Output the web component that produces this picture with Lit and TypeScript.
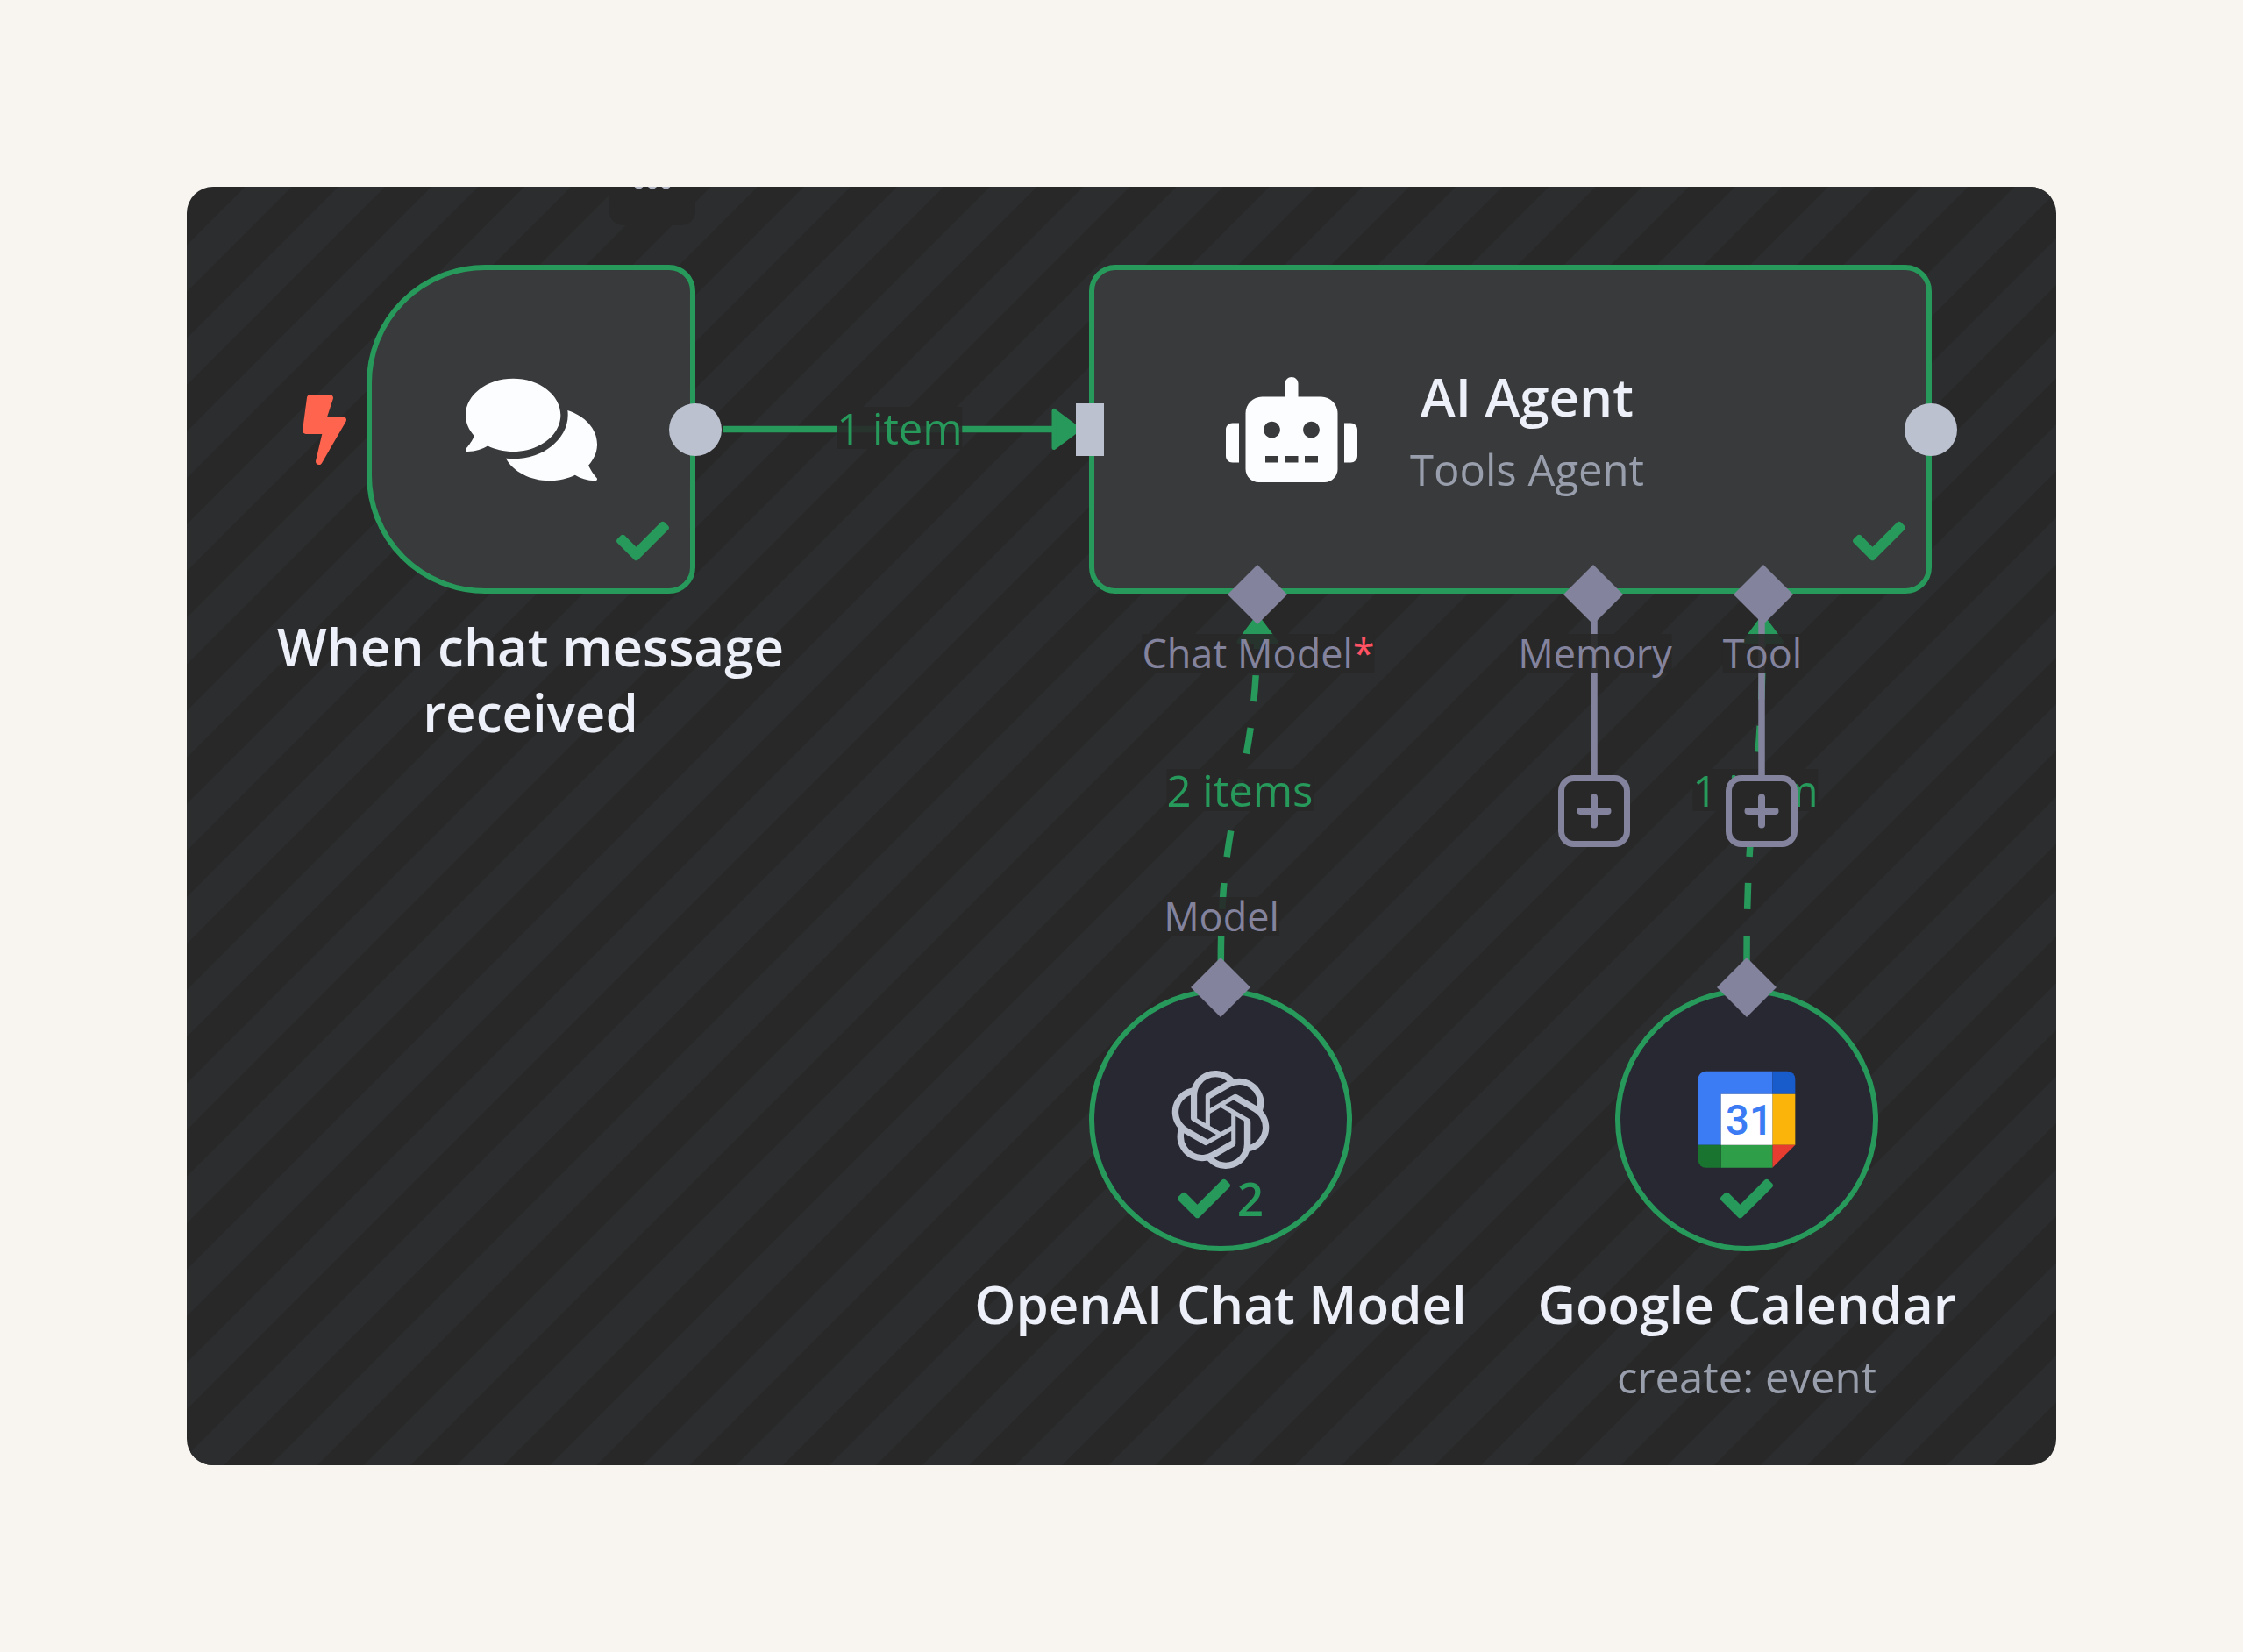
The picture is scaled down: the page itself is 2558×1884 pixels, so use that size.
import { LitElement, html, svg, css } from "lit";
import { customElement } from "lit/decorators.js";

type HandleKind = "dot" | "bar" | "diamond";

interface Point {
  x: number;
  y: number;
}

interface Handle extends Point {
  kind: HandleKind;
}

interface Label extends Point {
  text: string;
  required?: boolean;
}

const at = (p: Point) => `left:${p.x}px;top:${p.y}px`;

const edgeLabels: Label[] = [
  { x: 813, y: 275, text: "1 item" },
  { x: 1201, y: 688, text: "2 items" },
  { x: 1789, y: 688, text: "1 item" },
];

const handleLabels: Label[] = [
  { x: 1222, y: 532, text: "Chat Model", required: true },
  { x: 1606, y: 532, text: "Memory" },
  { x: 1797, y: 532, text: "Tool" },
  { x: 1180, y: 832, text: "Model" },
];

const handles: Handle[] = [
  { kind: "dot", x: 580, y: 277 },
  { kind: "bar", x: 1030, y: 277 },
  { kind: "dot", x: 1989, y: 277 },
  { kind: "diamond", x: 1221, y: 465 },
  { kind: "diamond", x: 1604, y: 465 },
  { kind: "diamond", x: 1798, y: 465 },
  { kind: "diamond", x: 1179, y: 913 },
  { kind: "diamond", x: 1779, y: 913 },
];

const addButtons = [
  { x: 1605, y: 712, name: "Add memory" },
  { x: 1796, y: 712, name: "Add tool" },
];

const checkIcon = html`<svg class="check" viewBox="0 0 512 512" aria-hidden="true">
  <path fill="currentColor" d="M173.898 439.404l-166.4-166.4c-9.997-9.997-9.997-26.206 0-36.204l36.203-36.204c9.997-9.998 26.207-9.998 36.204 0L192 312.69 432.095 72.596c9.997-9.997 26.207-9.997 36.204 0l36.203 36.204c9.997 9.997 9.997 26.206 0 36.204l-294.4 294.401c-9.998 9.997-26.207 9.997-36.204-.001z"/>
</svg>`;

const boltIcon = html`<svg viewBox="0 0 320 512" width="50" height="80" aria-hidden="true">
  <path fill="currentColor" d="M296 160H180.600l42.600-129.800C227.200 15 215.700 0 200 0H56C44 0 33.800 8.900 32.200 20.800l-32 240C-1.700 275.200 9.500 288 24 288h118.700L96.600 482.500c-3.600 15.200 8 29.500 23.300 29.500 8.400 0 16.400-4.400 20.800-12l176-304c9.300-15.900-2.200-36-20.700-36z"/>
</svg>`;

const commentsIcon = html`<svg viewBox="0 0 576 512" width="150" height="134" aria-hidden="true">
  <path fill="currentColor" d="M416 192c0-88.400-93.100-160-208-160S0 103.600 0 192c0 34.300 14.100 65.900 38 92-13.400 30.200-35.500 54.200-35.800 54.500-2.200 2.300-2.800 5.700-1.500 8.700S4.800 352 8 352c36.600 0 66.900-12.300 88.700-25 32.200 15.700 70.300 25 111.300 25 114.900 0 208-71.600 208-160zm122 220c23.900-26 38-57.700 38-92 0-66.900-53.500-124.200-129.300-148.100.9 6.600 1.300 13.300 1.300 20.100 0 105.900-107.700 192-240 192-10.800 0-21.300-.8-31.700-1.900C207.800 439.600 281.800 480 368 480c41 0 79.100-9.200 111.300-25 21.800 12.700 52.100 25 88.700 25 3.200 0 6.100-1.900 7.300-4.800 1.300-2.900.7-6.300-1.500-8.700-.3-.3-22.400-24.200-35.800-54.500z"/>
</svg>`;

const robotIcon = html`<svg viewBox="0 0 640 512" width="150" height="120" aria-hidden="true">
  <path fill="currentColor" d="M32 224h32v192H32c-17.700 0-32-14.300-32-32V256c0-17.700 14.300-32 32-32zm512-48v272c0 35.300-28.700 64-64 64H160c-35.300 0-64-28.700-64-64V176c0-44.200 35.800-80 80-80h112V32c0-17.700 14.300-32 32-32s32 14.300 32 32v64h112c44.200 0 80 35.800 80 80zM264 256c0-22.100-17.900-40-40-40s-40 17.900-40 40 17.900 40 40 40 40-17.900 40-40zm-8 128h-64v32h64v-32zm96 0h-64v32h64v-32zm104-128c0-22.100-17.900-40-40-40s-40 17.900-40 40 17.900 40 40 40 40-17.900 40-40zm-8 128h-64v32h64v-32zm192-128v128c0 17.700-14.300 32-32 32h-32V224h32c17.700 0 32 14.300 32 32z"/>
</svg>`;

const openAiIcon = html`<svg class="logo" viewBox="0 0 24 24" aria-hidden="true">
  <path fill="currentColor" d="M22.2819 9.8211a5.9847 5.9847 0 0 0-.5157-4.9108 6.0462 6.0462 0 0 0-6.5098-2.9A6.0651 6.0651 0 0 0 4.9807 4.1818a5.9847 5.9847 0 0 0-3.9977 2.9 6.0462 6.0462 0 0 0 .7427 7.0966 5.98 5.98 0 0 0 .511 4.9107 6.051 6.051 0 0 0 6.5146 2.9001A5.9847 5.9847 0 0 0 13.2599 24a6.0557 6.0557 0 0 0 5.7718-4.2058 5.9894 5.9894 0 0 0 3.9977-2.9001 6.0557 6.0557 0 0 0-.7475-7.0729zm-9.022 12.6081a4.4755 4.4755 0 0 1-2.8764-1.0408l.1419-.0804 4.7783-2.7582a.7948.7948 0 0 0 .3927-.6813v-6.7369l2.02 1.1686a.071.071 0 0 1 .038.052v5.5826a4.504 4.504 0 0 1-4.4945 4.4944zm-9.6607-4.1254a4.4708 4.4708 0 0 1-.5346-3.0137l.142.0852 4.783 2.7582a.7712.7712 0 0 0 .7806 0l5.8428-3.3685v2.3324a.0804.0804 0 0 1-.0332.0615L9.74 19.9502a4.4992 4.4992 0 0 1-6.1408-1.6464zM2.3408 7.8956a4.485 4.485 0 0 1 2.3655-1.9728V11.6a.7664.7664 0 0 0 .3879.6765l5.8144 3.3543-2.0201 1.1685a.0757.0757 0 0 1-.071 0l-4.8303-2.7865A4.504 4.504 0 0 1 2.3408 7.872zm16.5963 3.8558L13.1038 8.364 15.1192 7.2a.0757.0757 0 0 1 .071 0l4.8303 2.7913a4.4944 4.4944 0 0 1-.6765 8.1042v-5.6772a.79.79 0 0 0-.407-.667zm2.0107-3.0231l-.142-.0852-4.7735-2.7818a.7759.7759 0 0 0-.7854 0L9.409 9.2297V6.8974a.0662.0662 0 0 1 .0284-.0615l4.8303-2.7866a4.4992 4.4992 0 0 1 6.6802 4.66zM8.3065 12.863l-2.02-1.1638a.0804.0804 0 0 1-.038-.0567V6.0742a4.4992 4.4992 0 0 1 7.3757-3.4537l-.142.0805L8.704 5.459a.7948.7948 0 0 0-.3927.6813zm1.0976-2.3654l2.602-1.4998 2.6069 1.4998v2.9994l-2.5974 1.4997-2.6067-1.4997Z"/>
</svg>`;

const calendarIcon = html`<svg class="logo" viewBox="0 0 336 336" aria-hidden="true">
  <path fill="#3b7bf3" d="M28 2H256V80H80V254H2V28A26 26 0 0 1 28 2Z"/>
  <path fill="#185ccb" d="M256 2H308A26 26 0 0 1 334 28V80H256Z"/>
  <path fill="#fab40a" d="M256 80H334V254H256Z"/>
  <path fill="#e73c30" d="M256 254H334L256 332Z"/>
  <path fill="#2e9f48" d="M80 254H256V332H80Z"/>
  <path fill="#19742f" d="M2 254H80V332H28A26 26 0 0 1 2 306Z"/>
  <path fill="#ffffff" d="M80 80H256V254H80Z"/>
  <text class="day" x="96" y="219">31</text>
</svg>`;

@customElement("app-root")
export class AppRoot extends LitElement {
  static styles = css`
    :host {
      --success: #26995b;
      --port: #bbc1cf;
      --aux: #83839e;
      --title: #eef0f9;
      --subtitle: #999eac;
      --node: #393a3b;
      --base: #282828;
      display: flex;
      flex-direction: column;
      box-sizing: border-box;
      min-height: 100vh;
      padding: 213px;
      background: #f8f5f0;
      font-family: "Open Sans", "Noto Sans", sans-serif;
    }
    .canvas {
      position: relative;
      flex: 1;
      overflow: hidden;
      border-radius: 30px;
      background: var(--base);
    }
    .layer {
      position: absolute;
      inset: 0;
      width: 100%;
      height: 100%;
    }
    .menu {
      position: absolute;
      left: 482px;
      top: -32px;
      width: 98px;
      height: 76px;
      padding: 0;
      border: 0;
      border-radius: 16px;
      background: var(--base);
      color: #b1b5c3;
    }
    .menu svg {
      display: block;
      margin: 0 auto 20px;
    }
    .node {
      position: absolute;
      display: flex;
      align-items: center;
      justify-content: center;
      box-sizing: border-box;
      border: 6px solid var(--success);
      background: var(--node);
      color: #fcfdff;
    }
    .trigger {
      width: 375px;
      height: 375px;
      border-radius: 135px 30px 30px 135px;
    }
    .agent {
      justify-content: flex-start;
      width: 961px;
      height: 375px;
      padding-left: 150px;
      gap: 60px;
      border-radius: 30px;
    }
    .sub {
      width: 300px;
      height: 300px;
      border-radius: 50%;
      background: #282833;
      color: var(--port);
    }
    .logo {
      width: 112px;
      height: 112px;
    }
    .day {
      font-family: Roboto, sans-serif;
      font-size: 142px;
      font-weight: 500;
      fill: #3b7bf3;
    }
    .status {
      position: absolute;
      display: flex;
      align-items: center;
      gap: 8px;
      color: var(--success);
      font-size: 53px;
      font-weight: 600;
      line-height: 60px;
    }
    .corner {
      right: 24px;
      bottom: 24px;
    }
    .foot {
      left: 0;
      right: 0;
      bottom: 24px;
      justify-content: center;
    }
    .check {
      width: 60px;
      height: 60px;
    }
    .bolt {
      position: absolute;
      color: #ff644e;
    }
    .bolt svg {
      display: block;
    }
    .text,
    .caption {
      display: flex;
      flex-direction: column;
      gap: 15px;
      text-align: center;
    }
    .caption {
      position: absolute;
      width: 640px;
      transform: translateX(-50%);
    }
    .title,
    .subtitle {
      margin: 0;
    }
    .title {
      color: var(--title);
      font-size: 60px;
      font-weight: 600;
      line-height: 75px;
    }
    .subtitle {
      color: var(--subtitle);
      font-size: 49px;
      font-weight: 400;
      line-height: 60px;
    }
    .label {
      position: absolute;
      transform: translate(-50%, -50%);
      background: rgb(40 40 40 / 0.9);
      white-space: nowrap;
    }
    .edge {
      color: var(--success);
      font-size: 49px;
      line-height: 48px;
    }
    .port {
      color: var(--aux);
      font-size: 45px;
      line-height: 44px;
    }
    .required {
      color: #ff5264;
    }
    .handle {
      position: absolute;
      transform: translate(-50%, -50%);
    }
    .dot {
      width: 60px;
      height: 60px;
      border-radius: 50%;
      background: var(--port);
    }
    .bar {
      width: 32px;
      height: 60px;
      background: var(--port);
    }
    .diamond {
      width: 68px;
      height: 68px;
      clip-path: polygon(50% 0, 100% 50%, 50% 100%, 0 50%);
      background: var(--aux);
    }
    .add {
      position: absolute;
      display: grid;
      place-items: center;
      box-sizing: border-box;
      width: 82px;
      height: 82px;
      padding: 0;
      transform: translate(-50%, -50%);
      border: 7px solid var(--aux);
      border-radius: 18px;
      background: var(--base);
      color: var(--aux);
    }
  `;

  private renderBackdrop() {
    return html`<svg class="layer" aria-hidden="true">
      <defs>
        <pattern id="stripes" width="75.1" height="75.1" patternUnits="userSpaceOnUse"
          patternTransform="translate(66.6 0) rotate(45)">
          <rect width="37.55" height="76" fill="#2b2d2e" />
        </pattern>
      </defs>
      <rect width="100%" height="100%" fill="url(#stripes)" />
    </svg>`;
  }

  private renderArrow(x: number, y: number, angle: number) {
    return svg`<path transform="translate(${x} ${y}) rotate(${angle})" d="M0 0L-28 -21V21Z"
      fill="#26995b" stroke="#26995b" stroke-width="5" stroke-linejoin="round" />`;
  }

  private renderEdges() {
    return html`<svg class="layer" fill="none" stroke="#26995b" stroke-width="7.5" aria-hidden="true">
      <path d="M611 276.500H1000" />
      <path stroke-dasharray="30 30" d="M1179.300 884C1179.300 687 1221 687 1221 491" />
      <path stroke-dasharray="30 30" d="M1779 884C1779 687 1797.500 687 1797.500 491" />
      ${this.renderArrow(1017, 276.5, 0)}
      ${this.renderArrow(1221, 491, -90)}
      ${this.renderArrow(1797.5, 491, -90)}
    </svg>`;
  }

  private renderAddLines() {
    return html`<svg class="layer" stroke="#83839e" stroke-width="7.5" aria-hidden="true">
      ${addButtons.map((b) => svg`<path d="M${b.x} 480V680" />`)}
    </svg>`;
  }

  render() {
    return html`<main class="canvas">
      ${this.renderBackdrop()}
      <button class="menu" aria-label="More actions">
        <svg viewBox="0 0 44 14" width="44" height="14" fill="currentColor" aria-hidden="true">
          <circle cx="6.500" cy="7" r="6.300" />
          <circle cx="22" cy="7" r="6.300" />
          <circle cx="37.500" cy="7" r="6.300" />
        </svg>
      </button>
      ${this.renderEdges()}
      ${edgeLabels.map((l) => html`<span class="label edge" style=${at(l)}>${l.text}</span>`)}

      <div class="bolt" style=${at({ x: 132, y: 237 })}>${boltIcon}</div>
      <section class="node trigger" style=${at({ x: 205, y: 89 })}>
        ${commentsIcon}
        <div class="status corner">${checkIcon}</div>
      </section>
      <div class="caption" style=${at({ x: 392, y: 487 })}>
        <h2 class="title">When chat message received</h2>
      </div>

      <section class="node agent" style=${at({ x: 1029, y: 89 })}>
        ${robotIcon}
        <div class="text">
          <h2 class="title">AI Agent</h2>
          <p class="subtitle">Tools Agent</p>
        </div>
        <div class="status corner">${checkIcon}</div>
      </section>

      <section class="node sub" style=${at({ x: 1029, y: 914 })}>
        ${openAiIcon}
        <div class="status foot">${checkIcon}<span>2</span></div>
      </section>
      <div class="caption" style=${at({ x: 1179, y: 1237 })}>
        <h2 class="title">OpenAI Chat Model</h2>
      </div>

      <section class="node sub" style=${at({ x: 1629, y: 914 })}>
        ${calendarIcon}
        <div class="status foot">${checkIcon}</div>
      </section>
      <div class="caption" style=${at({ x: 1779, y: 1237 })}>
        <h2 class="title">Google Calendar</h2>
        <p class="subtitle">create: event</p>
      </div>

      ${this.renderAddLines()}
      ${handleLabels.map(
        (l) => html`<span class="label port" style=${at(l)}
          >${l.text}${l.required ? html`<span class="required">*</span>` : null}</span
        >`,
      )}
      ${handles.map((h) => html`<span class="handle ${h.kind}" style=${at(h)}></span>`)}
      ${addButtons.map(
        (b) => html`<button class="add" style=${at(b)} aria-label=${b.name}>
          <svg viewBox="0 0 40 40" width="40" height="40" aria-hidden="true">
            <path d="M20 4.500V35.500M4.500 20H35.500" stroke="currentColor" stroke-width="8" stroke-linecap="round" />
          </svg>
        </button>`,
      )}
    </main>`;
  }
}
